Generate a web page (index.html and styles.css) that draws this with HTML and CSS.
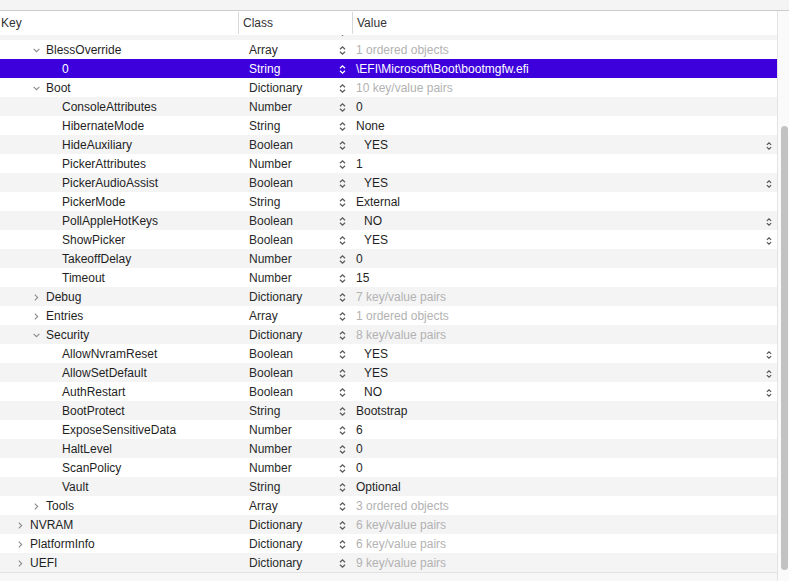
FILE: index.html
```html
<!DOCTYPE html>
<html>
<head>
<meta charset="utf-8">
<link rel="stylesheet" href="styles.css">
</head>
<body>
<svg class="defs" width="0" height="0">
  <symbol id="cd" viewBox="0 0 7 5"><path d="M0.6 0.8 L3.5 3.7 L6.4 0.8" fill="none" stroke="currentColor" stroke-width="1.1"/></symbol>
  <symbol id="cr" viewBox="0 0 5 7"><path d="M0.8 0.6 L3.7 3.5 L0.8 6.4" fill="none" stroke="currentColor" stroke-width="1.1"/></symbol>
  <symbol id="st" viewBox="0 0 7 11"><path d="M1 4.3 L3.5 1.8 L6 4.3 M1 6.7 L3.5 9.2 L6 6.7" fill="none" stroke="currentColor" stroke-width="1.3"/></symbol>
</svg>
<div class="window">
  <div class="topbar"></div>
  <div class="table">
    <div class="main">
      <div class="header">
        <div class="hcell hkey">Key</div>
        <div class="hcell hclass">Class</div>
        <div class="hcell hvalue">Value</div>
      </div>
      <div class="viewport">
        <div class="rows">
          <div class="row"><div class="key l1"><span class="tw"><svg class="cd"><use href="#cd"/></svg></span></div><div class="cls"><span></span><svg class="st"><use href="#st"/></svg></div><div class="val dim"></div></div>
          <div class="row"><div class="key l2"><span class="tw"><svg class="cd"><use href="#cd"/></svg></span>BlessOverride</div><div class="cls">Array<svg class="st"><use href="#st"/></svg></div><div class="val dim">1 ordered objects</div></div>
          <div class="row sel"><div class="key l3"><span class="tw"></span>0</div><div class="cls">String<svg class="st"><use href="#st"/></svg></div><div class="val">\EFI\Microsoft\Boot\bootmgfw.efi</div></div>
          <div class="row"><div class="key l2"><span class="tw"><svg class="cd"><use href="#cd"/></svg></span>Boot</div><div class="cls">Dictionary<svg class="st"><use href="#st"/></svg></div><div class="val dim">10 key/value pairs</div></div>
          <div class="row"><div class="key l3"><span class="tw"></span>ConsoleAttributes</div><div class="cls">Number<svg class="st"><use href="#st"/></svg></div><div class="val">0</div></div>
          <div class="row"><div class="key l3"><span class="tw"></span>HibernateMode</div><div class="cls">String<svg class="st"><use href="#st"/></svg></div><div class="val">None</div></div>
          <div class="row"><div class="key l3"><span class="tw"></span>HideAuxiliary</div><div class="cls">Boolean<svg class="st"><use href="#st"/></svg></div><div class="val bool"><span>YES</span><svg class="bst"><use href="#st"/></svg></div></div>
          <div class="row"><div class="key l3"><span class="tw"></span>PickerAttributes</div><div class="cls">Number<svg class="st"><use href="#st"/></svg></div><div class="val">1</div></div>
          <div class="row"><div class="key l3"><span class="tw"></span>PickerAudioAssist</div><div class="cls">Boolean<svg class="st"><use href="#st"/></svg></div><div class="val bool"><span>YES</span><svg class="bst"><use href="#st"/></svg></div></div>
          <div class="row"><div class="key l3"><span class="tw"></span>PickerMode</div><div class="cls">String<svg class="st"><use href="#st"/></svg></div><div class="val">External</div></div>
          <div class="row"><div class="key l3"><span class="tw"></span>PollAppleHotKeys</div><div class="cls">Boolean<svg class="st"><use href="#st"/></svg></div><div class="val bool"><span>NO</span><svg class="bst"><use href="#st"/></svg></div></div>
          <div class="row"><div class="key l3"><span class="tw"></span>ShowPicker</div><div class="cls">Boolean<svg class="st"><use href="#st"/></svg></div><div class="val bool"><span>YES</span><svg class="bst"><use href="#st"/></svg></div></div>
          <div class="row"><div class="key l3"><span class="tw"></span>TakeoffDelay</div><div class="cls">Number<svg class="st"><use href="#st"/></svg></div><div class="val">0</div></div>
          <div class="row"><div class="key l3"><span class="tw"></span>Timeout</div><div class="cls">Number<svg class="st"><use href="#st"/></svg></div><div class="val">15</div></div>
          <div class="row"><div class="key l2"><span class="tw"><svg class="cr"><use href="#cr"/></svg></span>Debug</div><div class="cls">Dictionary<svg class="st"><use href="#st"/></svg></div><div class="val dim">7 key/value pairs</div></div>
          <div class="row"><div class="key l2"><span class="tw"><svg class="cr"><use href="#cr"/></svg></span>Entries</div><div class="cls">Array<svg class="st"><use href="#st"/></svg></div><div class="val dim">1 ordered objects</div></div>
          <div class="row"><div class="key l2"><span class="tw"><svg class="cd"><use href="#cd"/></svg></span>Security</div><div class="cls">Dictionary<svg class="st"><use href="#st"/></svg></div><div class="val dim">8 key/value pairs</div></div>
          <div class="row"><div class="key l3"><span class="tw"></span>AllowNvramReset</div><div class="cls">Boolean<svg class="st"><use href="#st"/></svg></div><div class="val bool"><span>YES</span><svg class="bst"><use href="#st"/></svg></div></div>
          <div class="row"><div class="key l3"><span class="tw"></span>AllowSetDefault</div><div class="cls">Boolean<svg class="st"><use href="#st"/></svg></div><div class="val bool"><span>YES</span><svg class="bst"><use href="#st"/></svg></div></div>
          <div class="row"><div class="key l3"><span class="tw"></span>AuthRestart</div><div class="cls">Boolean<svg class="st"><use href="#st"/></svg></div><div class="val bool"><span>NO</span><svg class="bst"><use href="#st"/></svg></div></div>
          <div class="row"><div class="key l3"><span class="tw"></span>BootProtect</div><div class="cls">String<svg class="st"><use href="#st"/></svg></div><div class="val">Bootstrap</div></div>
          <div class="row"><div class="key l3"><span class="tw"></span>ExposeSensitiveData</div><div class="cls">Number<svg class="st"><use href="#st"/></svg></div><div class="val">6</div></div>
          <div class="row"><div class="key l3"><span class="tw"></span>HaltLevel</div><div class="cls">Number<svg class="st"><use href="#st"/></svg></div><div class="val">0</div></div>
          <div class="row"><div class="key l3"><span class="tw"></span>ScanPolicy</div><div class="cls">Number<svg class="st"><use href="#st"/></svg></div><div class="val">0</div></div>
          <div class="row"><div class="key l3"><span class="tw"></span>Vault</div><div class="cls">String<svg class="st"><use href="#st"/></svg></div><div class="val">Optional</div></div>
          <div class="row"><div class="key l2"><span class="tw"><svg class="cr"><use href="#cr"/></svg></span>Tools</div><div class="cls">Array<svg class="st"><use href="#st"/></svg></div><div class="val dim">3 ordered objects</div></div>
          <div class="row"><div class="key l1"><span class="tw"><svg class="cr"><use href="#cr"/></svg></span>NVRAM</div><div class="cls">Dictionary<svg class="st"><use href="#st"/></svg></div><div class="val dim">6 key/value pairs</div></div>
          <div class="row"><div class="key l1"><span class="tw"><svg class="cr"><use href="#cr"/></svg></span>PlatformInfo</div><div class="cls">Dictionary<svg class="st"><use href="#st"/></svg></div><div class="val dim">6 key/value pairs</div></div>
          <div class="row"><div class="key l1"><span class="tw"><svg class="cr"><use href="#cr"/></svg></span>UEFI</div><div class="cls">Dictionary<svg class="st"><use href="#st"/></svg></div><div class="val dim">9 key/value pairs</div></div>
        </div>
      </div>
      <div class="footer"></div>
    </div>
    <div class="scrollbar"><div class="thumb"></div></div>
  </div>
</div>
</body>
</html>
```

FILE: styles.css
```css
* { box-sizing: border-box; }
html, body {
  margin: 0;
  padding: 0;
  background: #ffffff;
}
body {
  font-family: "Liberation Sans", Arial, sans-serif;
  font-size: 12px;
  color: #222222;
  overflow: hidden;
}
.defs {
  position: absolute;
  width: 0;
  height: 0;
}
.window {
  width: 789px;
  height: 581px;
  display: flex;
  flex-direction: column;
}
.topbar {
  height: 11px;
  flex: none;
  background: #f4f4f4;
  border-bottom: 1px solid #cbcbcb;
}
.table {
  flex: 1;
  display: flex;
  min-height: 0;
}
.main {
  width: 778px;
  flex: none;
  display: flex;
  flex-direction: column;
  border-right: 1px solid #e3e3e3;
}
.header {
  height: 24px;
  flex: none;
  display: grid;
  grid-template-columns: 238px 114px 1fr;
  background: #ffffff;
  color: #333333;
  padding-top: 1px;
  line-height: 23px;
}
.hcell {
  padding-left: 4px;
  border-left: 1px solid #dcdcdc;
}
.hkey {
  padding-left: 1px;
  border-left: none;
}
.hclass, .hvalue {
  border-image: linear-gradient(to bottom, transparent 1px, #d9d9d9 1px, #d9d9d9 21px, transparent 21px) 1;
}
.viewport {
  height: 537px;
  flex: none;
  overflow: hidden;
}
.rows {
  margin-top: -14px;
}
.row {
  height: 19px;
  padding-top: 2px;
  line-height: 17px;
  display: grid;
  grid-template-columns: 238px 114px 1fr;
  white-space: nowrap;
}
.row:nth-child(odd) {
  background: #f4f4f5;
}
.row.sel {
  background: #3d00dc;
  color: #ffffff;
}
.key {
  display: flex;
  align-items: center;
  color: #1f1f1f;
}
.l1 { padding-left: 14px; }
.l2 { padding-left: 30px; }
.l3 { padding-left: 46px; }
.tw {
  width: 16px;
  flex: none;
  display: flex;
  align-items: center;
  color: #8c8c8c;
}
.cd {
  width: 7px;
  height: 5px;
  margin-left: 3px;
}
.cr {
  width: 5px;
  height: 7px;
  margin-left: 4px;
}
.cls {
  display: flex;
  align-items: center;
  justify-content: space-between;
  padding-left: 11px;
  padding-right: 6px;
  color: #2a2a2a;
}
.st {
  width: 7px;
  height: 11px;
  color: #5a5a5a;
}
.val {
  padding-left: 4px;
  color: #1f1f1f;
  overflow: hidden;
}
.val.dim {
  color: #b2b2b2;
}
.val.bool {
  display: flex;
  align-items: center;
  justify-content: space-between;
  padding-left: 12px;
  padding-right: 5px;
}
.bst {
  width: 6px;
  height: 10px;
  color: #555555;
}
.row.sel .key,
.row.sel .cls,
.row.sel .val,
.row.sel .st {
  color: #ffffff;
}
.footer {
  flex: 1;
  background: #f7f7f7;
  border-top: 1px solid #e2e2e2;
}
.scrollbar {
  flex: 1;
  background: #fafafa;
  padding-top: 115px;
  padding-left: 3px;
}
.thumb {
  width: 7px;
  height: 444px;
  background: #c2c2c2;
  border-radius: 4px;
}
```
